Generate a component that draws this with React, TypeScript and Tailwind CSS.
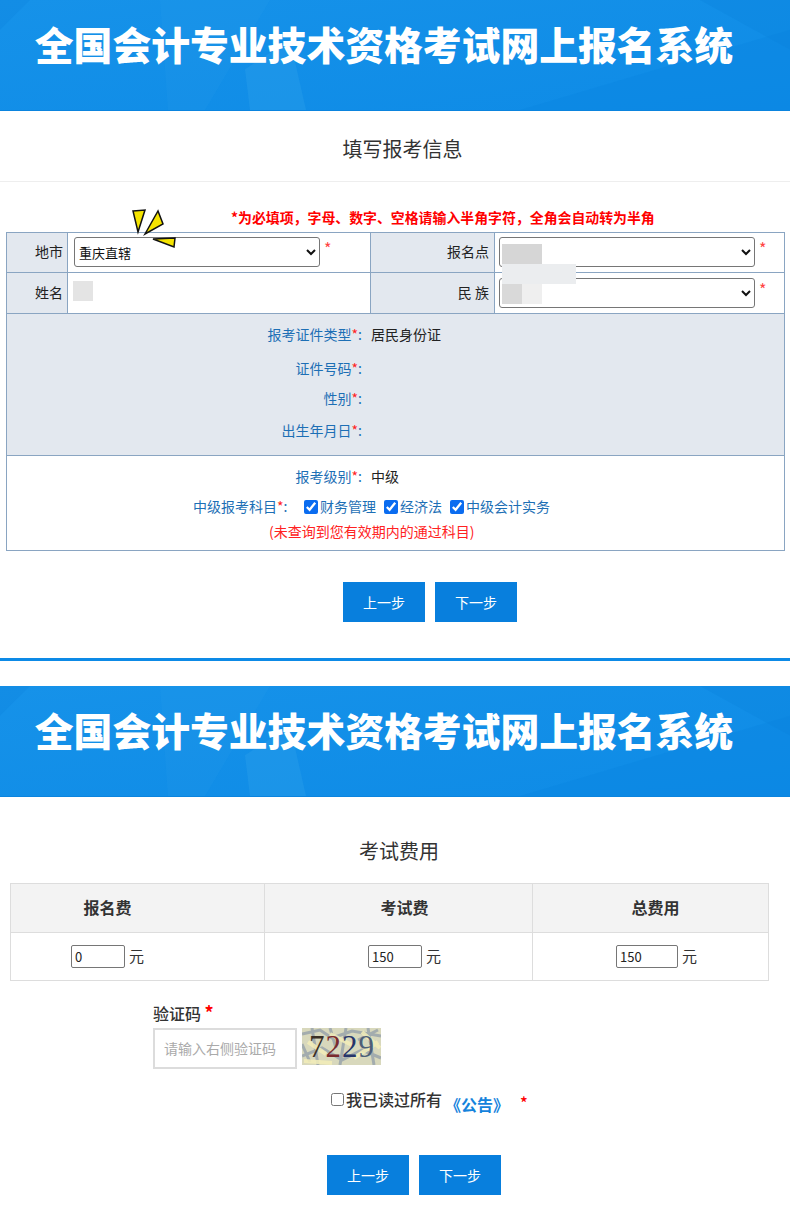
const sans = { fontFamily: '"Noto Sans CJK SC", "Liberation Sans", sans-serif' };

function Banner() {
  return (
    <div className="relative h-[111px] overflow-hidden border-b border-[#0b84de] bg-[#1189e4]">
      <svg className="absolute inset-0 h-full w-full" viewBox="0 0 790 111" preserveAspectRatio="none" aria-hidden="true">
        <defs>
          <linearGradient id="bannerA" x1="0" y1="0" x2="1" y2="1">
            <stop offset="0" stopColor="#1692e9" />
            <stop offset="1" stopColor="#0e8be6" />
          </linearGradient>
        </defs>
        <rect width="790" height="111" fill="url(#bannerA)" />
        <polygon points="0,0 30,0 0,30" fill="#0c80dd" opacity="0.25" />
        <polygon points="160,0 270,0 205,111 168,111" fill="#2ca0ea" opacity="0.15" />
        <polygon points="245,70 290,40 306,111 250,111" fill="#35a7ec" opacity="0.3" />
        <polygon points="520,111 790,30 790,111" fill="#0a85e0" opacity="0.35" />
        <polygon points="700,0 790,0 790,50" fill="#0b80dc" opacity="0.3" />
      </svg>
      <div className="relative flex h-[92px] items-center justify-center whitespace-nowrap pb-[6px] pr-[22px] text-[38.8px] font-black text-white" style={sans}>
        全国会计专业技术资格考试网上报名系统
      </div>
    </div>
  );
}

function Star() {
  return <span className="text-[#f22]">*</span>;
}

function Buttons({ className }: { className: string }) {
  const cls = "flex h-[40px] w-[82px] items-center justify-center bg-[#087fdd] text-[14px] text-white";
  return (
    <div className={`flex gap-[10px] ${className}`}>
      <button className={cls}>上一步</button>
      <button className={cls}>下一步</button>
    </div>
  );
}

function Sel({ value, className }: { value?: string; className: string }) {
  return (
    <select className={`h-[30px] rounded-[3px] border border-[#767676] bg-white text-[13px] text-[#111] ${className}`} style={sans} defaultValue={value}>
      <option>{value ?? ""}</option>
    </select>
  );
}

function FormRow({ label, value }: { label: string; value?: string }) {
  return (
    <div className="flex">
      <div className="w-[355px] text-right text-[14px] text-[#1d6fb5]">
        {label}
        <Star />:
      </div>
      {value && <div className="ml-[9px] text-[14px] text-[#222]">{value}</div>}
    </div>
  );
}

function Check({ label }: { label: string }) {
  return (
    <label className="flex items-center gap-[2px] text-[14px] text-[#1d6fb5]">
      <input type="checkbox" defaultChecked className="mt-[2px] h-[14px] w-[14px] accent-[#0a6cf0]" />
      {label}
    </label>
  );
}

function Blur({ className }: { className: string }) {
  return <div className={`absolute ${className}`} />;
}

function Form() {
  const lab = "flex items-center justify-end bg-[#e3e8ef] pb-[2px] text-[14px] text-[#222]";
  const req = "ml-[4px] text-[16px] leading-[22px] text-[#f44]";
  return (
    <div className="relative ml-[6px] w-[779px] border border-[#8aa5c2] text-[#222]">
      <div className="flex h-[40px] border-b border-[#8aa5c2]">
        <div className={`${lab} w-[61px] border-r border-[#8aa5c2] pr-[4px]`}>地市</div>
        <div className="flex w-[303px] border-r border-[#8aa5c2] pl-[6px] pt-[4px]">
          <Sel value="重庆直辖" className="w-[246px]" />
          <span className={req}>*</span>
        </div>
        <div className={`${lab} w-[124px] border-r border-[#8aa5c2] pr-[5px]`}>报名点</div>
        <div className="flex flex-1 pl-[4px] pt-[4px]">
          <Sel className="w-[256px]" />
          <span className={req}>*</span>
        </div>
      </div>
      <div className="flex h-[41px] border-b border-[#8aa5c2]">
        <div className={`${lab} w-[61px] border-r border-[#8aa5c2] pr-[4px]`}>姓名</div>
        <div className="w-[303px] border-r border-[#8aa5c2]" />
        <div className={`${lab} w-[124px] border-r border-[#8aa5c2] pr-[5px]`}>民 族</div>
        <div className="flex flex-1 pl-[4px] pt-[5px]">
          <Sel className="w-[256px]" />
          <span className={req}>*</span>
        </div>
      </div>
      <div className="h-[142px] border-b border-[#8aa5c2] bg-[#e3e8ef] pt-[10px] leading-[20px]">
        <FormRow label="报考证件类型" value="居民身份证" />
        <div className="mt-[14px]"><FormRow label="证件号码" /></div>
        <div className="mt-[10px]"><FormRow label="性别" /></div>
        <div className="mt-[12px]"><FormRow label="出生年月日" /></div>
      </div>
      <div className="h-[94px] pt-[10px] leading-[20px]">
        <FormRow label="报考级别" value="中级" />
        <div className="mt-[10px] flex pl-[186px]">
          <div className="w-[111px] text-[14px] text-[#1d6fb5]">
            中级报考科目<Star />:
          </div>
          <div className="flex gap-[8px]">
            <Check label="财务管理" />
            <Check label="经济法" />
            <Check label="中级会计实务" />
          </div>
        </div>
        <div className="mt-[5px] pl-[262px] text-[14px] leading-[20px] text-[#f22]">(未查询到您有效期内的通过科目)</div>
      </div>
      <Blur className="left-[66px] top-[48px] h-[20px] w-[20px] bg-[#e4e4e4]" />
      <Blur className="left-[495px] top-[11px] h-[20px] w-[40px] bg-[#d6d6d6]" />
      <Blur className="left-[495px] top-[31px] h-[20px] w-[74px] bg-[#ebedef]" />
      <Blur className="left-[495px] top-[51px] h-[20px] w-[20px] bg-[#d9d9d9]" />
      <Blur className="left-[515px] top-[51px] h-[20px] w-[20px] bg-[#efefef]" />
      <svg className="absolute left-[125px] top-[-24px] h-[42px] w-[46px]" viewBox="0 0 46 42" aria-hidden="true">
        <polygon points="1,2 13,1 6,23" fill="#f5e400" stroke="#111" strokeWidth="1.5" />
        <polygon points="13,25 26,2 31,15" fill="#f5e400" stroke="#111" strokeWidth="1.5" />
        <polygon points="21,30 43,29 42,38" fill="#f5e400" stroke="#111" strokeWidth="1.5" />
      </svg>
    </div>
  );
}

function Fees() {
  const th = "flex h-[49px] items-center justify-center border-b border-[#ddd] bg-[#f3f3f3] pb-[2px] text-[16px] font-bold text-[#333]";
  const td = "flex h-[47px] items-center justify-center text-[15px] text-[#333]";
  const inp = "h-[23px] rounded-[2px] border border-[#767676] bg-white pl-[3px] text-[13px] text-[#222]";
  return (
    <div className="ml-[10px] grid w-[759px] grid-cols-[254px_268px_235px] border border-[#ddd]">
      <div className={`${th} border-r pr-[60px]`}>报名费</div>
      <div className={`${th} border-r pl-[12px]`}>考试费</div>
      <div className={`${th} pl-[10px]`}>总费用</div>
      <div className={`${td} border-r border-[#ddd] pr-[60px]`}>
        <input className={`${inp} w-[54px]`} defaultValue="0" />
        <span className="ml-[4px]">元</span>
      </div>
      <div className={`${td} border-r border-[#ddd] pl-[12px]`}>
        <input className={`${inp} w-[54px]`} defaultValue="150" />
        <span className="ml-[4px]">元</span>
      </div>
      <div className={`${td} pl-[12px]`}>
        <input className={`${inp} w-[62px]`} defaultValue="150" />
        <span className="ml-[4px]">元</span>
      </div>
    </div>
  );
}

function Captcha() {
  return (
    <div className="relative flex h-[37px] w-[79px] items-center justify-center overflow-hidden bg-[#cfcfb4]">
      <svg className="absolute inset-0 h-full w-full" viewBox="0 0 79 37" aria-hidden="true">
        <rect width="79" height="37" fill="#d8d8bc" />
        <path d="M0 6 L18 2 L30 10 L50 3 L79 8 M0 28 L20 20 L40 32 L60 22 L79 30 M10 0 L16 37 M44 0 L38 37 M66 0 L72 37 M0 16 L8 34 M28 0 L34 20 M56 12 L76 2" stroke="#8795a6" strokeWidth="3" fill="none" opacity="0.65" />
        <path d="M6 14 L24 26 M28 6 L52 18 M52 30 L76 14 M2 33 L30 35 M60 4 L78 20" stroke="#f3edb8" strokeWidth="4" fill="none" opacity="0.85" />
      </svg>
      <div className="relative flex gap-[1px] text-[31px] leading-none" style={{ fontFamily: '"Liberation Serif", serif' }}>
        <span className="text-[#3a3026]">7</span>
        <span className="text-[#7a2a2e]">2</span>
        <span className="text-[#27356a]">2</span>
        <span className="text-[#4e5f78]">9</span>
      </div>
    </div>
  );
}

export default function App() {
  return (
    <div className="h-[1217px] w-[790px] overflow-hidden bg-white" style={sans}>
      <Banner />
      <div className="flex h-[71px] items-center justify-center border-b border-[#eee] pl-[15px] pt-[5px] text-[20px] text-[#333]">填写报考信息</div>
      <div className="h-[50px] pl-[231px] pt-[26px] text-[13.9px] font-bold leading-[18px] text-[#f00]">*为必填项，字母、数字、空格请输入半角字符，全角会自动转为半角</div>
      <Form />
      <Buttons className="ml-[343px] mt-[31px]" />
      <div className="mt-[36px] h-[3px] bg-[#0d8ae6]" />
      <div className="h-[25px]" />
      <Banner />
      <div className="flex h-[86px] items-start justify-center pl-[8px] pt-[40px] text-[20px] leading-[28px] text-[#333]">考试费用</div>
      <Fees />
      <div className="ml-[153px] mt-[19px] text-[16px] font-medium leading-[24px] text-[#333]">
        验证码 <span className="text-[18px] font-bold text-[#f00]">*</span>
      </div>
      <div className="ml-[153px] mt-[3px] flex gap-[5px]">
        <input placeholder="请输入右侧验证码" className="h-[41px] w-[144px] border-2 border-[#dcdcdc] bg-white pb-[2px] pl-[9px] text-[14px] placeholder:text-[#aaa]" />
        <Captcha />
      </div>
      <div className="ml-[331px] mt-[17px] flex h-[26px] items-start text-[16px] font-medium leading-[26px] text-[#333]">
        <input type="checkbox" className="mt-[7px] h-[13px] w-[13px]" />
        <span className="ml-[2px]">我已读过所有</span>
        <span className="ml-[3px] mt-[5px] font-bold text-[#1583dc]">《公告》</span>
        <span className="ml-[11px] mt-[3px] text-[#f00]">*</span>
      </div>
      <Buttons className="ml-[327px] mt-[43px]" />
    </div>
  );
}
